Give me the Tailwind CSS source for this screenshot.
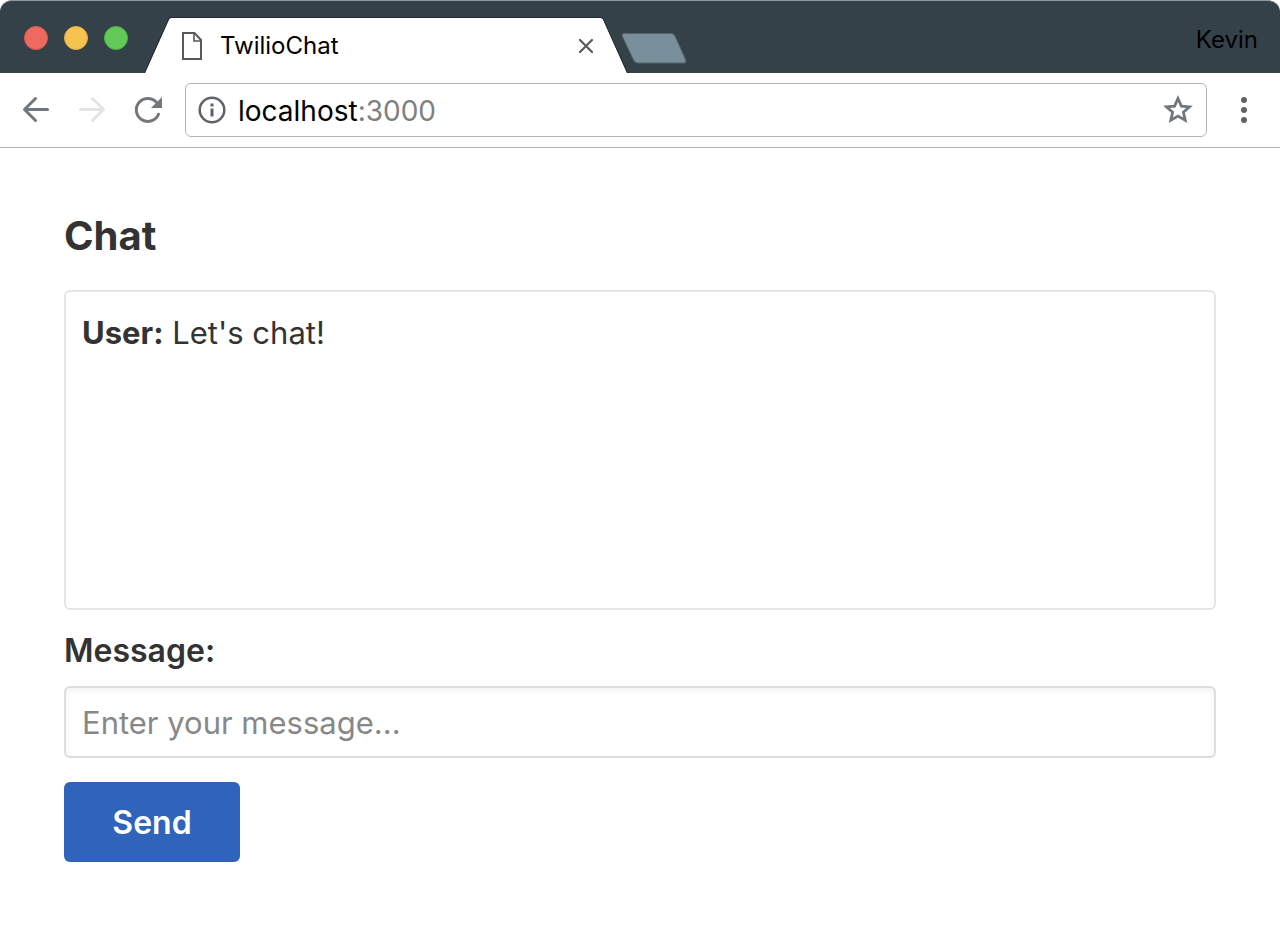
<!DOCTYPE html>
<html lang="en">
<head>
    <meta charset="utf-8">
    <meta name="viewport" content="width=device-width, initial-scale=1">
    <title>TwilioChat</title>
    <script src="https://cdn.jsdelivr.net/npm/@tailwindcss/browser@4"></script>
</head>
<body class="bg-white font-['Inter','Liberation_Sans',sans-serif] text-[#333333]">

    <!-- tab strip -->
    <header class="flex h-[73px] items-end rounded-t-xl border-t border-[#8f999d] bg-[#354148]">
        <div class="flex gap-4 self-start pt-[25px] pl-6">
            <button type="button" aria-label="Close" class="size-6 rounded-full border border-[#dd5a50] bg-[#ee6a5f]"></button>
            <button type="button" aria-label="Minimize" class="size-6 rounded-full border border-[#e0ae48] bg-[#f6c351]"></button>
            <button type="button" aria-label="Zoom" class="size-6 rounded-full border border-[#4fb343] bg-[#62ca56]"></button>
        </div>

        <div class="ml-4 flex h-[56px] w-[484px] shrink-0">
            <svg class="h-[56px] w-[28px] shrink-0" viewBox="0 0 28 56" fill="none">
                <path d="M1 56 24.500 3.500Q25.500 1 27 1H28V56Z" fill="#fff"/>
                <path d="M.500 56 24.500 2.500Q25.500 .500 27 .500H28" stroke="#232c32"/>
            </svg>
            <div class="flex flex-1 items-center border-t border-[#232c32] bg-white pr-[2px] pl-2">
                <svg class="h-7 w-6 shrink-0" viewBox="0 0 24 28" fill="none" stroke="#5a5a5a" stroke-width="2">
                    <path d="M3 1H14.500L21 8V27H3Z"/>
                    <path d="M14 1V9H21" stroke-width="1.600"/>
                </svg>
                <span class="ml-4 flex-1 text-2xl text-black">TwilioChat</span>
                <button type="button" aria-label="Close tab" class="flex size-6 items-center justify-center">
                    <svg class="size-4" viewBox="0 0 16 16" stroke="#5a5a5a" stroke-width="2.200" stroke-linecap="round"><path d="M2 2 14 14M14 2 2 14"/></svg>
                </button>
            </div>
            <svg class="h-[56px] w-[28px] shrink-0" viewBox="0 0 28 56" fill="none">
                <path d="M27 56 3.500 3.500Q2.500 1 1 1H0V56Z" fill="#fff"/>
                <path d="M27.500 56 3.500 2.500Q2.500 .500 1 .500H0" stroke="#232c32"/>
            </svg>
        </div>

        <button type="button" aria-label="New tab" class="-ml-2 mb-[9px]">
            <svg class="h-8 w-[68px]" viewBox="0 0 68 32"><path d="M4.500 1.500H51Q54 1.500 55.200 4.500L65.500 27.500Q67 31 63.500 31H18Q15 31 13.500 28L2.500 4.500Q1.500 1.500 4.500 1.500Z" fill="#788f9b" stroke="#53666f"/></svg>
        </button>

        <button type="button" class="mr-[22px] ml-auto self-start pt-[23px] text-2xl text-black">Kevin</button>
    </header>

    <!-- toolbar -->
    <nav class="flex items-center border-b border-[#b3b3b3] bg-white py-[10px] pl-2">
        <button type="button" aria-label="Back" class="flex w-14 justify-center">
            <svg class="size-8" viewBox="0 0 32 32" fill="none" stroke="#72777b" stroke-width="3" stroke-linecap="round" stroke-linejoin="round"><path d="M27.500 15.500H5M15.500 4.500 4.500 15.500 15.500 26.500"/></svg>
        </button>
        <button type="button" aria-label="Forward" disabled class="flex w-14 justify-center">
            <svg class="size-8" viewBox="0 0 32 32" fill="none" stroke="#e3e3e3" stroke-width="3" stroke-linecap="round" stroke-linejoin="round"><path d="M4.500 15.500H27.500M16.500 4.500 27.500 15.500 16.500 26.500"/></svg>
        </button>
        <button type="button" aria-label="Reload" class="flex w-14 justify-center">
            <svg class="size-8" viewBox="0 0 32 32" fill="none"><path d="M26.500 20.200A11.500 11.500 0 1 1 24.200 8" stroke="#72777b" stroke-width="3" stroke-linecap="round"/><path d="M30 3V14H19Z" fill="#72777b"/></svg>
        </button>

        <div class="ml-[9px] flex h-[54px] flex-1 items-center rounded-md border border-[#b3b3b3] px-3">
            <svg class="size-[28px] shrink-0" viewBox="0 0 28 28"><circle cx="14" cy="14" r="12.300" fill="none" stroke="#5f6368" stroke-width="2.500"/><path d="M12.500 7.500h3v3h-3zM12.500 12.500h3v8h-3z" fill="#5f6368"/></svg>
            <a href="#" class="ml-3 flex-1 pt-[2px] text-[28px] text-black">localhost<span class="text-[#808080]">:3000</span></a>
            <button type="button" aria-label="Bookmark this page">
                <svg class="size-8" viewBox="0 0 32 32" fill="none" stroke="#72777b" stroke-width="2.800"><path d="M16 4.500 19.400 12.100 27.500 12.900 21.400 18.200 23.200 26.200 16 22 8.800 26.200 10.600 18.200 4.500 12.900 12.600 12.100Z"/></svg>
            </button>
        </div>

        <button type="button" aria-label="Menu" class="flex w-[73px] justify-center">
            <svg class="h-8 w-2" viewBox="0 0 8 32" fill="#5f6368"><circle cx="4" cy="6" r="3"/><circle cx="4" cy="16" r="3"/><circle cx="4" cy="26" r="3"/></svg>
        </button>
    </nav>

    <main class="px-16 pt-16">
        <h1 class="text-[40px] leading-[48px] font-bold">Chat</h1>

        <div class="mt-[30px] h-80 rounded-md border-2 border-[#e5e5e5] p-4 text-[31px] leading-[50px]">
            <p><strong>User:</strong> Let's chat!</p>
        </div>

        <form class="mt-4">
            <label for="message" class="block text-[32px] leading-[50px] font-semibold">Message:</label>
            <input id="message" type="text" placeholder="Enter your message..." class="mt-[10px] block h-[72px] w-full rounded-md border-2 border-[#dddddd] px-4 text-[31px] shadow-[inset_0_2px_6px_rgba(0,0,0,0.06)] placeholder:text-[#888888]">
            <button type="button" class="mt-6 h-20 min-w-44 rounded-md bg-[#3064bb] px-12 pt-[2px] text-[32px] font-semibold text-white">Send</button>
        </form>
    </main>

</body>
</html>
